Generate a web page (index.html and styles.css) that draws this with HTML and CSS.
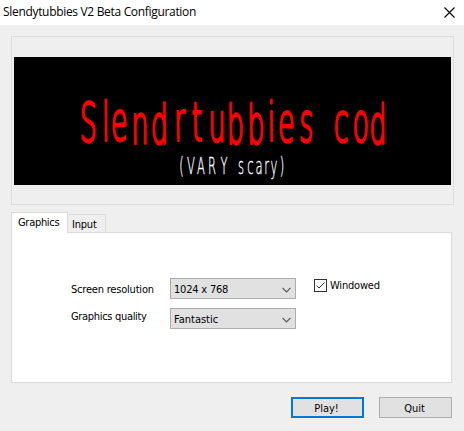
FILE: index.html
```html
<!DOCTYPE html>
<html lang="en">
<head>
    <meta charset="UTF-8">
    <meta name="viewport" content="width=device-width, initial-scale=1.0">
    <title>Slendytubbies V2 Beta Configuration</title>
    <link rel="stylesheet" href="styles.css">
</head>
<body>
    <div class="title-bar">
        <span class="title">Slendytubbies V2 Beta Configuration</span>
        <svg class="close" width="11" height="11" viewBox="0 0 11 11">
            <path d="M0.5 0.5L10.5 10.5M10.5 0.5L0.5 10.5"/>
        </svg>
    </div>

    <div class="banner-frame">
        <svg class="banner" width="437" height="128" viewBox="0 0 437 128">
            <!-- each letter is placed on its own for the hand-written look -->
            <text class="banner-title" transform="scale(.5 1)" x="148 184 211 252 291 332 366 406 443 484 515 544 584 620 654 693 728" y="84 84 84 87 87 84 84 84 87 87 84 84 84 84 84 84 87" rotate="2 -1 -2 -1 -1 -2 -1 0 -1 -1 -1 2 2 0 2 2 -1">Slendrtubbies cod</text>
            <text class="banner-sub" transform="scale(.5 1)" y="117" x="335 354 374 396 420 436 454 473 490 505 520 536">(VARY scary)</text>
        </svg>
    </div>

    <div class="tabs">
        <div class="tab active">Graphics</div>
        <div class="tab">Input</div>
    </div>
    <div class="panel">
        <div class="row">
            <span class="label">Screen resolution</span>
            <div class="select">
                <span>1024 x 768</span>
                <svg width="9" height="6" viewBox="0 0 9 6"><path d="M0.5 0.8L4.5 4.8L8.5 0.8"/></svg>
            </div>
            <div class="check">
                <svg width="13" height="13" viewBox="0 0 13 13">
                    <rect x="0.5" y="0.5" width="12" height="12"/>
                    <path d="M2.5 6.5L5 9L10.5 3.5"/>
                </svg>
                <span>Windowed</span>
            </div>
        </div>
        <div class="row">
            <span class="label">Graphics quality</span>
            <div class="select">
                <span>Fantastic</span>
                <svg width="9" height="6" viewBox="0 0 9 6"><path d="M0.5 0.8L4.5 4.8L8.5 0.8"/></svg>
            </div>
        </div>
    </div>

    <div class="buttons">
        <button class="button default">Play!</button>
        <button class="button">Quit</button>
    </div>
</body>
</html>
```
FILE: styles.css
```css
* {
    margin: 0;
    padding: 0;
    box-sizing: border-box;
}

body {
    height: 431px;
    background: #efefef;
    color: #000;
    font: 11px/13px "DejaVu Sans Condensed", "DejaVu Sans", Tahoma, sans-serif;
    letter-spacing: -0.2px;
    white-space: nowrap;
    overflow: hidden;
}

svg {
    display: block;
    fill: none;
}

/* Title bar */
.title-bar {
    display: flex;
    justify-content: space-between;
    height: 25px;
    padding: 4px 9px 0 3px;
    background: #fff;
}

.title {
    font: 12px/16px "Open Sans", "Segoe UI", sans-serif;
    letter-spacing: -0.32px;
}

.close {
    margin-top: 3px;
    stroke: #000;
    stroke-width: 1.1;
}

/* Banner */
.banner-frame {
    width: 443px;
    height: 169px;
    margin: 11px 0 0 11px;
    padding: 20px 2px;
    border: 1px solid #dcdcdc;
}

.banner {
    background: #000;
}

.banner text {
    font-family: "DejaVu Sans Light", "DejaVu Sans", sans-serif;
    font-weight: 200;
    letter-spacing: 0;
    text-anchor: middle;
    stroke-linejoin: round;
}

.banner-title {
    font-size: 54px;
    fill: #f00;
    stroke: #f00;
    stroke-width: 2.5;
}

.banner-sub {
    font-size: 23px;
    fill: #fff;
    stroke: #fff;
    stroke-width: 0.4;
}

/* Tabs */
.tabs {
    display: flex;
    align-items: flex-end;
    height: 21px;
    margin: 7px 0 0 11px;
}

.tab {
    width: 39px;
    height: 19px;
    margin-left: -1px;
    padding: 3px 0 0 4px;
    border: 1px solid #d9d9d9;
}

.tab.active {
    position: relative;
    z-index: 1;
    width: 57px;
    height: 21px;
    margin-left: 0;
    padding-left: 6px;
    background: #fff;
    border-bottom: 0;
    letter-spacing: -0.3px;
}

.panel {
    display: flex;
    flex-direction: column;
    gap: 9px;
    width: 441px;
    height: 151px;
    margin: -1px 0 0 11px;
    padding: 45px 0 0 58px;
    background: #fff;
    border: 1px solid #d9d9d9;
}

.row {
    display: flex;
    height: 21px;
}

.label {
    width: 100px;
    padding: 5px 0 0 1px;
}

.row + .row .label {
    padding-top: 2px;
    letter-spacing: -0.32px;
}

.select {
    display: flex;
    justify-content: space-between;
    width: 126px;
    height: 21px;
    padding: 4px 4px 0 3px;
    background: #e1e1e1;
    border: 1px solid #adadad;
    letter-spacing: -0.2px;
}

.row + .row .select {
    letter-spacing: 0;
}

.select svg {
    margin-top: 4px;
    stroke: #555;
    stroke-width: 1.2;
}

.check {
    display: flex;
    gap: 3px;
    margin: 1px 0 0 18px;
}

.check svg {
    stroke: #333;
}

/* Buttons */
.buttons {
    display: flex;
    gap: 15px;
    margin: 14px 0 0 291px;
}

.button {
    width: 73px;
    height: 21px;
    padding: 1px 2px 0 0;
    background: #e1e1e1;
    border: 1px solid #adadad;
    color: #000;
    font: inherit;
}

.button.default {
    border: 2px solid #0078d7;
}
```
